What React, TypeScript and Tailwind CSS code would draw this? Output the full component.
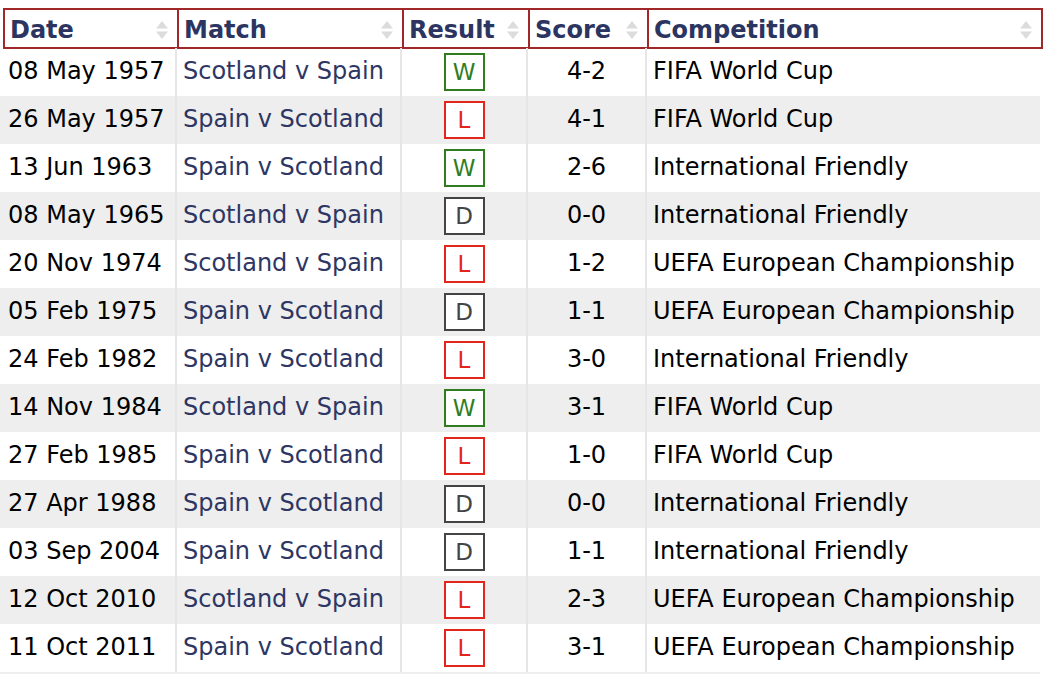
import React from 'react';

type Result = 'W' | 'L' | 'D';

interface Fixture {
  date: string;
  match: string;
  result: Result;
  score: string;
  competition: string;
}

const fixtures: Fixture[] = [
  { date: '08 May 1957', match: 'Scotland v Spain', result: 'W', score: '4-2', competition: 'FIFA World Cup' },
  { date: '26 May 1957', match: 'Spain v Scotland', result: 'L', score: '4-1', competition: 'FIFA World Cup' },
  { date: '13 Jun 1963', match: 'Spain v Scotland', result: 'W', score: '2-6', competition: 'International Friendly' },
  { date: '08 May 1965', match: 'Scotland v Spain', result: 'D', score: '0-0', competition: 'International Friendly' },
  { date: '20 Nov 1974', match: 'Scotland v Spain', result: 'L', score: '1-2', competition: 'UEFA European Championship' },
  { date: '05 Feb 1975', match: 'Spain v Scotland', result: 'D', score: '1-1', competition: 'UEFA European Championship' },
  { date: '24 Feb 1982', match: 'Spain v Scotland', result: 'L', score: '3-0', competition: 'International Friendly' },
  { date: '14 Nov 1984', match: 'Scotland v Spain', result: 'W', score: '3-1', competition: 'FIFA World Cup' },
  { date: '27 Feb 1985', match: 'Spain v Scotland', result: 'L', score: '1-0', competition: 'FIFA World Cup' },
  { date: '27 Apr 1988', match: 'Spain v Scotland', result: 'D', score: '0-0', competition: 'International Friendly' },
  { date: '03 Sep 2004', match: 'Spain v Scotland', result: 'D', score: '1-1', competition: 'International Friendly' },
  { date: '12 Oct 2010', match: 'Scotland v Spain', result: 'L', score: '2-3', competition: 'UEFA European Championship' },
  { date: '11 Oct 2011', match: 'Spain v Scotland', result: 'L', score: '3-1', competition: 'UEFA European Championship' },
];

const resultStyles: Record<Result, string> = {
  W: 'border-[#2f7d1f] text-[#2f7d1f]',
  L: 'border-[#e3261c] text-[#e3261c]',
  D: 'border-[#444444] text-[#444444]',
};

function SortIcon() {
  return (
    <svg width="14" height="22" viewBox="0 0 14 22" className="shrink-0">
      <path d="M7 2 L13 9.5 H1 Z" fill="#dcdcdc" />
      <path d="M7 20 L13 12.5 H1 Z" fill="#dcdcdc" />
    </svg>
  );
}

function HeaderCell({ label, className }: { label: string; className: string }) {
  return (
    <div className={`flex items-center justify-between border-2 border-[#a02828] -ml-[2px] first:ml-0 pl-[5px] pr-[8px] pt-[3px] ${className}`}>
      <span className="font-bold text-[#2c3561]">{label}</span>
      <SortIcon />
    </div>
  );
}

export default function App() {
  return (
    <div
      className="w-[1050px] h-[676px] bg-white overflow-hidden text-[24px] leading-none"
      style={{ fontFamily: '"DejaVu Sans", Verdana, sans-serif' }}
    >
      <div className="flex h-[41px] mt-[8px] ml-[3px]">
        <HeaderCell label="Date" className="w-[176px]" />
        <HeaderCell label="Match" className="w-[227px]" />
        <HeaderCell label="Result" className="w-[128px]" />
        <HeaderCell label="Score" className="w-[121px]" />
        <HeaderCell label="Competition" className="w-[396px]" />
      </div>

      <div className="w-[1040px] -mt-[1px]">
        {fixtures.map((f, i) => (
          <div
            key={i}
            className={`flex h-[48px] ${i % 2 === 1 ? 'bg-[#eeeeee]' : 'bg-white'} ${i === fixtures.length - 1 ? 'border-b-2 border-[#eeeeee] h-[50px]' : ''}`}
          >
            <div className="w-[177px] flex items-center pl-[8px] pb-[3px] border-r-2 border-[#e6e6e6] text-black">{f.date}</div>
            <div className="w-[225px] flex items-center pl-[6px] pb-[3px] border-r-2 border-[#e6e6e6] text-[#2e3663]">{f.match}</div>
            <div className="w-[126px] flex items-center justify-center border-r-2 border-[#e6e6e6]">
              <span
                className={`w-[41px] h-[38px] border-2 bg-white flex items-center justify-center text-[23px] ${resultStyles[f.result]}`}
              >
                {f.result}
              </span>
            </div>
            <div className="w-[119px] flex items-center justify-center pb-[3px] border-r-2 border-[#e6e6e6] text-black">{f.score}</div>
            <div className="flex-1 flex items-center pl-[6px] pb-[3px] text-black">{f.competition}</div>
          </div>
        ))}
      </div>
    </div>
  );
}
